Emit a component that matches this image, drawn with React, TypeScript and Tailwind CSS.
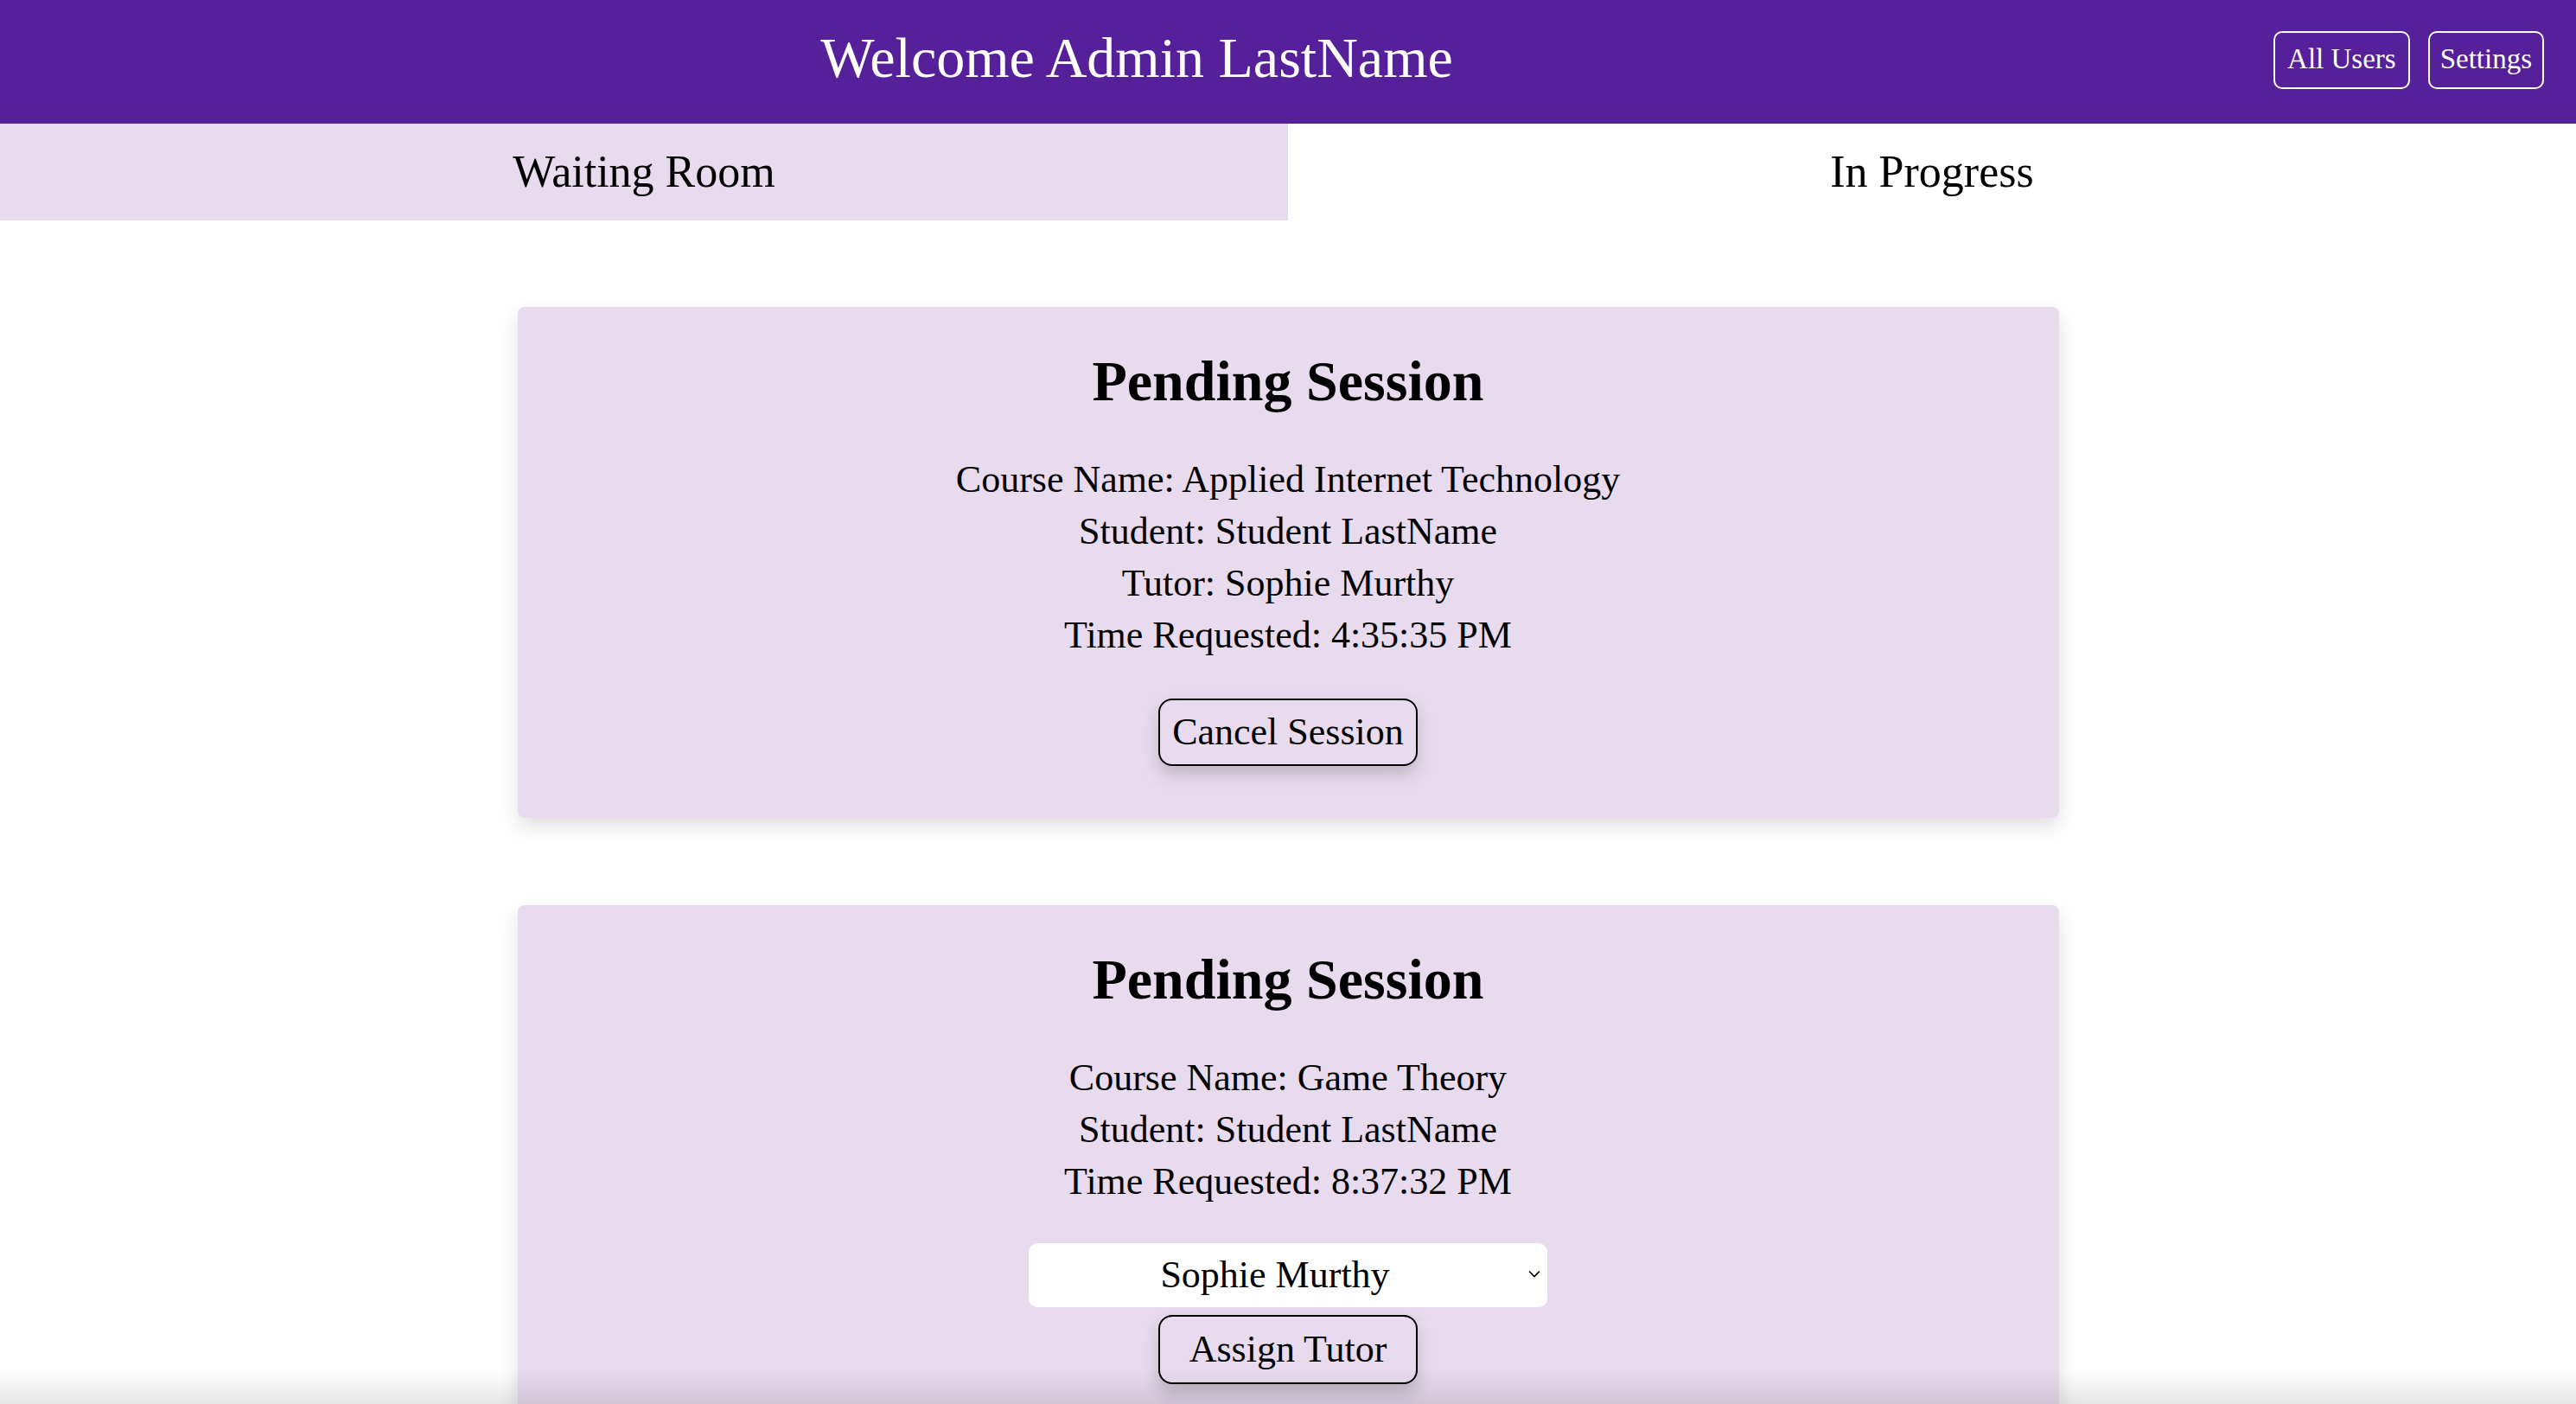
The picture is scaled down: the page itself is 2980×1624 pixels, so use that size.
const sessions = [
  {
    course: "Applied Internet Technology",
    student: "Student LastName",
    tutor: "Sophie Murthy",
    time: "4:35:35 PM",
  },
  {
    course: "Game Theory",
    student: "Student LastName",
    tutor: null,
    time: "8:37:32 PM",
  },
];

function SessionCard({ s }: { s: (typeof sessions)[number] }) {
  return (
    <div className="w-[1783px] rounded-[8px] bg-[#e8dbee] pt-[46px] pb-[60px] flex flex-col items-center shadow-[0_10px_22px_rgba(0,0,0,0.13)]">
      <h2 className="text-[66px] leading-[80px] font-bold text-black">Pending Session</h2>
      <div className="mt-[44px] text-[44px] leading-[60px] text-black text-center">
        <p>Course Name: {s.course}</p>
        <p>Student: {s.student}</p>
        {s.tutor && <p>Tutor: {s.tutor}</p>}
        <p>Time Requested: {s.time}</p>
      </div>
      {s.tutor ? (
        <button className="mt-[43px] w-[300px] h-[78px] rounded-[16px] border-2 border-black bg-[#e8dbee] text-[44px] text-black shadow-[0_10px_20px_rgba(0,0,0,0.18)]">
          Cancel Session
        </button>
      ) : (
        <div className="mt-[41px] flex flex-col items-center gap-[9px]">
          <div className="relative w-[600px] h-[74px]">
            <select className="w-full h-full appearance-none rounded-[10px] bg-white text-[44px] text-black pr-[30px] [text-align-last:center] outline-none">
              <option>Sophie Murthy</option>
            </select>
            <svg
              className="absolute right-[8px] top-[31px] pointer-events-none"
              width="14"
              height="9"
              viewBox="0 0 14 9"
              fill="none"
              stroke="black"
              strokeWidth="1.6"
            >
              <path d="M1 1.5 L7 7.5 L13 1.5" />
            </svg>
          </div>
          <button className="w-[300px] h-[80px] rounded-[16px] border-2 border-black bg-[#e8dbee] text-[44px] text-black shadow-[0_10px_20px_rgba(0,0,0,0.18)]">
            Assign Tutor
          </button>
        </div>
      )}
    </div>
  );
}

export default function App() {
  return (
    <div className="min-h-screen bg-white font-['Liberation_Serif',serif]">
      <header className="h-[143px] bg-[#56209a] flex items-center pr-[37px] pb-[5px]">
        <h1 className="flex-1 text-center text-white text-[66px] leading-none mb-[4px]">Welcome Admin LastName</h1>
        <div className="flex gap-[21px]">
          <button className="h-[67px] px-[14px] rounded-[10px] border-2 border-white text-white text-[33px]">
            All Users
          </button>
          <button className="h-[67px] px-[12px] rounded-[10px] border-2 border-white text-white text-[33px]">
            Settings
          </button>
        </div>
      </header>

      <nav className="grid grid-cols-2 h-[112px]">
        <div className="bg-[#e8dbee] flex items-center justify-center text-[52px] text-black">Waiting Room</div>
        <div className="bg-white flex items-center justify-center text-[52px] text-black">In Progress</div>
      </nav>

      <main className="flex flex-col items-center gap-[101px] pt-[100px] pb-[100px]">
        {sessions.map((s) => (
          <SessionCard key={s.time} s={s} />
        ))}
      </main>

      <div className="fixed bottom-0 left-0 right-0 h-[40px] pointer-events-none bg-gradient-to-b from-transparent to-black/10" />
    </div>
  );
}
